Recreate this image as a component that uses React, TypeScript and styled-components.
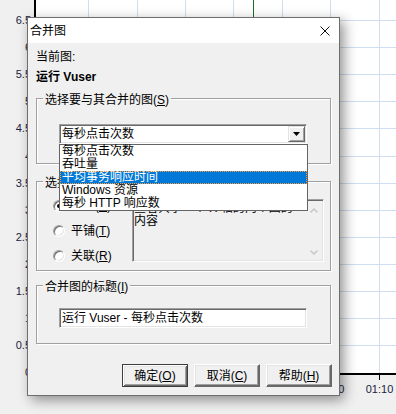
import React from "react";
import styled, { createGlobalStyle } from "styled-components";

const FONT = `"Liberation Sans", "Noto Sans CJK SC", sans-serif`;

const GlobalStyle = createGlobalStyle`
  html, body { margin: 0; padding: 0; background: #f0f0f0; }
  body { font-family: ${FONT}; }
  * { box-sizing: border-box; }
`;

/* ---------- backdrop chart ---------- */
const Desktop = styled.div`
  position: relative;
  width: 396px;
  height: 414px;
  overflow: hidden;
  background: #f0f0f0;
`;

const ChartSvg = styled.svg`
  display: block;
`;

const gridXs = [88, 137, 185, 233, 282, 330, 379];
const gridYs = Array.from({ length: 13 }, (_, k) => Math.round(20 + 27.1 * k));
const yLabels = Array.from({ length: 14 }, (_, k) => {
  const v = 6.5 - 0.5 * k;
  return { text: Number.isInteger(v) ? String(v) : v.toFixed(1), y: Math.round(20 + 27.1 * k) };
});

function ChartBackdrop() {
  return (
    <ChartSvg width={396} height={414} viewBox="0 0 396 414">
      <rect x={0} y={0} width={396} height={414} fill="#f0f0f0" />
      <rect x={36} y={0} width={360} height={373} fill="#ffffff" />
      {gridXs.map((x) => (
        <line key={"gx" + x} x1={x + 0.5} y1={0} x2={x + 0.5} y2={373} stroke="#cfdff1" strokeWidth={1} />
      ))}
      {gridYs.map((y) => (
        <line key={"gy" + y} x1={36} y1={y + 0.5} x2={396} y2={y + 0.5} stroke="#cfdff1" strokeWidth={1} />
      ))}
      <line x1={253.5} y1={0} x2={253.5} y2={120} stroke="#1f6e1f" strokeWidth={1} />
      <rect x={34} y={0} width={2} height={375} fill="#000" />
      <rect x={34} y={373} width={362} height={2} fill="#000" />
      {gridXs.map((x) => (
        <line key={"tk" + x} x1={x + 0.5} y1={375} x2={x + 0.5} y2={380} stroke="#000" strokeWidth={1} />
      ))}
      {yLabels.map((l) => (
        <text
          key={"yl" + l.text}
          x={31}
          y={l.y + 4}
          textAnchor="end"
          fontFamily="Liberation Sans, sans-serif"
          fontSize={11}
          fill="#1c2340"
        >
          {l.text}
        </text>
      ))}
      <text x={330.5} y={393} textAnchor="middle" fontFamily="Liberation Sans, sans-serif" fontSize={11} fill="#1c2340">
        01:00
      </text>
      <text x={379.5} y={393} textAnchor="middle" fontFamily="Liberation Sans, sans-serif" fontSize={11} fill="#1c2340">
        01:10
      </text>
    </ChartSvg>
  );
}

/* ---------- dialog window ---------- */
const Window = styled.div`
  position: absolute;
  left: 27px;
  top: 17px;
  width: 313px;
  height: 379px;
  border: 1px solid #6e6e6e;
  background: #f0f0f0;
  box-shadow: 4px 4px 12px rgba(0, 0, 0, 0.42);
  display: flex;
  flex-direction: column;
  font-family: ${FONT};
  font-size: 12px;
  color: #000;
`;

const TitleBar = styled.div`
  height: 25px;
  flex: none;
  background: #ffffff;
  display: flex;
  align-items: center;
  justify-content: space-between;
  padding: 0 9px 0 2px;
`;

const Title = styled.span`
  line-height: 14px;
`;

const CloseSvg = styled.svg`
  display: block;
`;

function CloseIcon() {
  return (
    <CloseSvg width={10} height={10} viewBox="0 0 10 10">
      <path d="M0.5 0.5 L9.5 9.5 M9.5 0.5 L0.5 9.5" stroke="#111" strokeWidth={1} fill="none" />
    </CloseSvg>
  );
}

const Body = styled.div`
  flex: 1;
  display: flex;
  flex-direction: column;
  padding: 7px 8px 8px 8px;
`;

const Caption = styled.div`
  line-height: 14px;
  height: 14px;
`;

const CurrentGraph = styled.div`
  margin-top: 6px;
  line-height: 14px;
  height: 14px;
  font-weight: bold;
`;

const Key = styled.span`
  text-decoration: underline;
  text-underline-offset: 1px;
`;

const Group = styled.fieldset<{ $h: number; $mt: number }>`
  margin: ${(p) => p.$mt}px 0 0 0;
  padding: 0;
  min-width: 0;
  height: ${(p) => p.$h}px;
  flex: none;
  border: 1px solid #a0a0a0;
  box-shadow: inset 1px 1px 0 #ffffff, 1px 1px 0 #ffffff;
`;

const Legend = styled.legend`
  margin-left: 6px;
  padding: 4px 2px 0 2px;
  line-height: 14px;
  background: #f0f0f0;
`;

const GroupInner = styled.div<{ $pt: number; $pl: number }>`
  padding: ${(p) => p.$pt}px 0 0 ${(p) => p.$pl}px;
`;

/* combobox */
const ComboWrap = styled.div`
  position: relative;
  width: 248px;
`;

const sunken = `
  border: 1px solid;
  border-color: #a0a0a0 #ffffff #ffffff #a0a0a0;
  box-shadow: inset 1px 1px 0 #696969, inset -1px -1px 0 #e3e3e3;
`;

const Combo = styled.div`
  ${sunken}
  height: 20px;
  background: #ffffff;
  display: flex;
  align-items: center;
  padding-left: 2px;
`;

const FieldText = styled.span`
  line-height: 14px;
  white-space: nowrap;
`;

const DropButton = styled.div`
  margin: 1px 1px 1px auto;
  width: 17px;
  height: 16px;
  background: #f0f0f0;
  border: 1px solid;
  border-color: #e3e3e3 #696969 #696969 #e3e3e3;
  box-shadow: inset 1px 1px 0 #ffffff, inset -1px -1px 0 #a0a0a0;
  display: flex;
  align-items: center;
  justify-content: center;
`;

const List = styled.ul`
  position: absolute;
  top: 100%;
  left: 0;
  width: 249px;
  margin: 0;
  padding: 0;
  list-style: none;
  background: #ffffff;
  border: 1px solid #646464;
  z-index: 5;
`;

const Item = styled.li<{ $active?: boolean }>`
  height: 13px;
  line-height: 13px;
  padding-left: 2px;
  white-space: nowrap;
  background: ${(p) => (p.$active ? "#0078d7" : "transparent")};
  color: ${(p) => (p.$active ? "#ffffff" : "#000000")};
  outline: ${(p) => (p.$active ? "1px dotted #ff9b3d" : "none")};
  outline-offset: -1px;
`;

/* merge type */
const TypeRow = styled.div`
  display: flex;
  align-items: flex-start;
  padding-left: 16px;
`;

const RadioCol = styled.div`
  width: 79px;
  margin-top: 3px;
  display: flex;
  flex-direction: column;
`;

const RadioRow = styled.label`
  height: 25px;
  display: flex;
  align-items: center;
  gap: 6px;
  line-height: 14px;
`;

const RadioDot = styled.span<{ $checked?: boolean }>`
  position: relative;
  width: 12px;
  height: 12px;
  flex: none;
  border-radius: 50%;
  background: #ffffff;
  border: 1px solid;
  border-color: #a0a0a0 #ffffff #ffffff #a0a0a0;
  box-shadow: inset 1px 1px 0 #696969, inset -1px -1px 0 #e3e3e3;
  &::after {
    content: "";
    display: ${(p) => (p.$checked ? "block" : "none")};
    position: absolute;
    left: 3px;
    top: 3px;
    width: 4px;
    height: 4px;
    border-radius: 50%;
    background: #000;
  }
`;

const DescBox = styled.div`
  ${sunken}
  margin-top: 9px;
  width: 192px;
  height: 63px;
  background: #f0f0f0;
  display: flex;
`;

const DescText = styled.div`
  flex: 1;
  padding: 2px 8px 0 1px;
  line-height: 13px;
  overflow: hidden;
`;

const ScrollCol = styled.div`
  width: 17px;
  margin: 1px 1px 1px 0;
  display: flex;
  flex-direction: column;
  justify-content: space-between;
  align-items: center;
  padding: 7px 0 5px 0;
`;

function Chevron({ down }: { down?: boolean }) {
  return (
    <svg width={8} height={5} viewBox="0 0 8 5">
      <polyline
        points={down ? "0.5,0.5 4,4 7.5,0.5" : "0.5,4.5 4,1 7.5,4.5"}
        stroke="#c4c4c4"
        strokeWidth={1.4}
        fill="none"
      />
    </svg>
  );
}

/* title input */
const TextInput = styled.div`
  ${sunken}
  width: 248px;
  height: 20px;
  background: #ffffff;
  display: flex;
  align-items: center;
  padding-left: 2px;
`;

/* buttons */
const ButtonRow = styled.div`
  margin-top: auto;
  margin-right: -1px;
  display: flex;
  justify-content: flex-end;
  gap: 6px;
`;

const Button = styled.button<{ $default?: boolean }>`
  width: 66px;
  height: 23px;
  padding: 0;
  font-family: ${FONT};
  font-size: 12px;
  line-height: 14px;
  color: #000;
  background: #f0f0f0;
  border: 1px solid ${(p) => (p.$default ? "#3c3c3c" : "#ffffff")};
  box-shadow: ${(p) =>
    p.$default
      ? "inset 1px 1px 0 #ffffff, inset -1px -1px 0 #696969, inset 2px 2px 0 #e3e3e3, inset -2px -2px 0 #a0a0a0"
      : "inset -1px -1px 0 #696969, inset 1px 1px 0 #e3e3e3, inset -2px -2px 0 #a0a0a0"};
  ${(p) => (p.$default ? "" : "border-color: #ffffff #696969 #696969 #ffffff;")}
`;

const graphs = ["每秒点击次数", "吞吐量", "平均事务响应时间", "Windows 资源", "每秒 HTTP 响应数"];

export default function App() {
  return (
    <>
      <GlobalStyle />
      <Desktop>
        <ChartBackdrop />
        <Window>
          <TitleBar>
            <Title>合并图</Title>
            <CloseIcon />
          </TitleBar>
          <Body>
            <Caption>当前图:</Caption>
            <CurrentGraph>运行 Vuser</CurrentGraph>

            <Group $h={75} $mt={5}>
              <Legend>
                选择要与其合并的图(<Key>S</Key>)
              </Legend>
              <GroupInner $pt={17} $pl={22}>
                <ComboWrap>
                  <Combo>
                    <FieldText>每秒点击次数</FieldText>
                    <DropButton>
                      <svg width={7} height={4} viewBox="0 0 7 4">
                        <polygon points="0,0 7,0 3.5,4" fill="#000" />
                      </svg>
                    </DropButton>
                  </Combo>
                  <List>
                    {graphs.map((g) => (
                      <Item key={g} $active={g === "平均事务响应时间"}>
                        {g}
                      </Item>
                    ))}
                  </List>
                </ComboWrap>
              </GroupInner>
            </Group>

            <Group $h={99} $mt={8}>
              <Legend>选择合并类型</Legend>
              <TypeRow>
                <RadioCol>
                  <RadioRow>
                    <RadioDot $checked />
                    <span>
                      叠加(<Key>V</Key>)
                    </span>
                  </RadioRow>
                  <RadioRow>
                    <RadioDot />
                    <span>
                      平铺(<Key>T</Key>)
                    </span>
                  </RadioRow>
                  <RadioRow>
                    <RadioDot />
                    <span>
                      关联(<Key>R</Key>)
                    </span>
                  </RadioRow>
                </RadioCol>
                <DescBox>
                  <DescText>查看共享一个 X 轴的两个图的内容</DescText>
                  <ScrollCol>
                    <Chevron />
                    <Chevron down />
                  </ScrollCol>
                </DescBox>
              </TypeRow>
            </Group>

            <Group $h={68} $mt={5}>
              <Legend>
                合并图的标题(<Key>I</Key>)
              </Legend>
              <GroupInner $pt={14} $pl={22}>
                <TextInput>
                  <FieldText>运行 Vuser - 每秒点击次数</FieldText>
                </TextInput>
              </GroupInner>
            </Group>

            <ButtonRow>
              <Button $default>
                确定(<Key>O</Key>)
              </Button>
              <Button>
                取消(<Key>C</Key>)
              </Button>
              <Button>
                帮助(<Key>H</Key>)
              </Button>
            </ButtonRow>
          </Body>
        </Window>
      </Desktop>
    </>
  );
}
